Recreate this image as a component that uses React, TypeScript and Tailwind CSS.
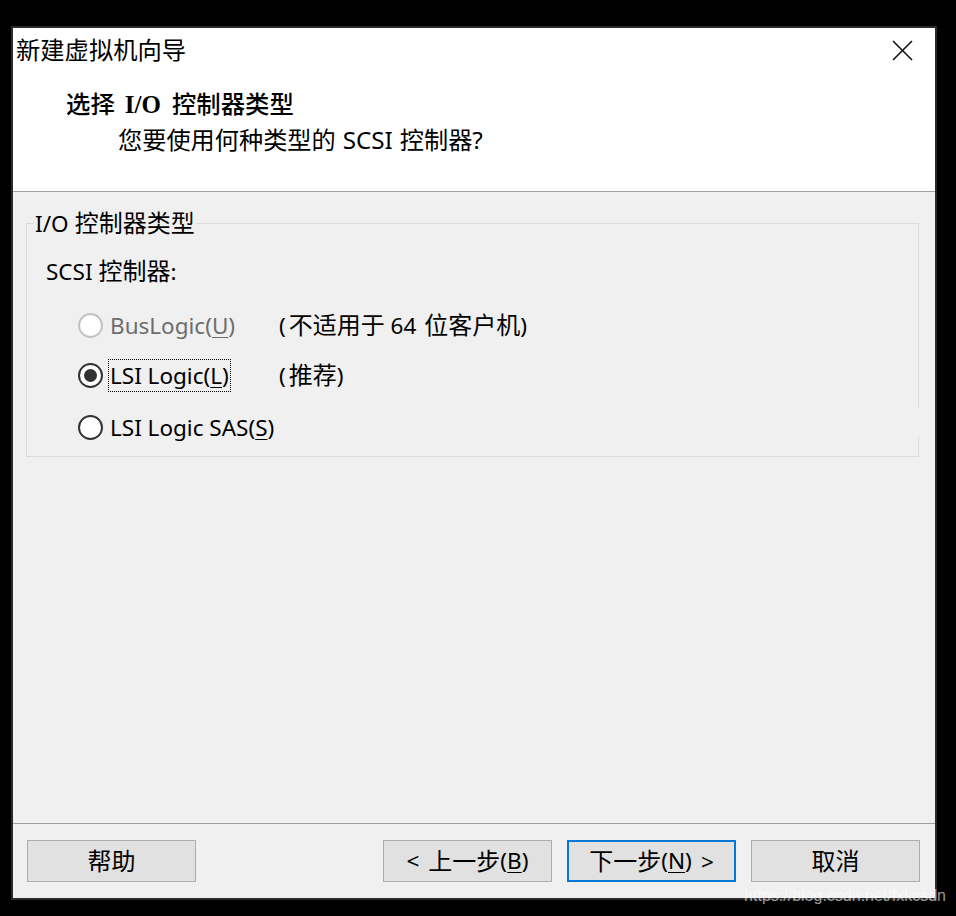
import React from "react";

function L({ children }: { children: React.ReactNode }) {
  return <span className="text-[22.5px]">{children}</span>;
}

function U({ children }: { children: React.ReactNode }) {
  return <span className="underline decoration-1 underline-offset-[3px]">{children}</span>;
}

function Radio({ checked = false, disabled = false }: { checked?: boolean; disabled?: boolean }) {
  return (
    <span
      className={
        disabled
          ? "flex h-[25px] w-[25px] shrink-0 items-center justify-center rounded-full border-2 border-[#c2c2c2] bg-white"
          : "flex h-[25px] w-[25px] shrink-0 items-center justify-center rounded-full border-2 border-[#333333] bg-white"
      }
    >
      {checked && <span className="h-[13px] w-[13px] rounded-full bg-[#333333]" />}
    </span>
  );
}

function Btn({ children, primary = false }: { children: React.ReactNode; primary?: boolean }) {
  return (
    <div
      className={
        primary
          ? "flex h-[42px] w-[169px] items-center justify-center border-2 border-[#0078d7] bg-[#e1e1e1] text-[24px] leading-[30px] text-black"
          : "flex h-[42px] w-[169px] items-center justify-center border border-[#adadad] bg-[#e1e1e1] text-[24px] leading-[30px] text-black"
      }
    >
      {children}
    </div>
  );
}

export default function App() {
  return (
    <div className="relative h-[916px] w-[956px] overflow-hidden bg-black pl-[11px] pt-[26px] font-['Noto_Sans','Noto_Sans_CJK_SC',sans-serif]">
      <div className="flex h-[874px] w-[926px] flex-col border-2 border-[#2b2b2b]">
        {/* header */}
        <div className="h-[164px] shrink-0 border-b border-[#a0a0a0] bg-white">
          <div className="flex h-[44px] items-center justify-between pl-[3px] pr-[22px]">
            <span className="text-[24.3px] leading-none text-black">新建虚拟机向导</span>
            <svg width="21" height="21" viewBox="0 0 21 21" className="mt-[1px]">
              <path d="M1 1 L20 20 M20 1 L1 20" stroke="#111" strokeWidth="1.6" fill="none" />
            </svg>
          </div>
          <div className="mt-[14px] flex h-[36px] items-center pl-[53px] text-[24.4px] font-medium leading-none text-black">
            <span>选择</span>
            <span className="ml-[10px] font-['Liberation_Serif',serif] text-[25px] font-bold">I/O</span>
            <span className="ml-[11px]">控制器类型</span>
          </div>
          <div className="flex h-[36px] items-center pl-[105px] text-[24.2px] leading-none text-black">
            <span>您要使用何种类型的</span>
            <span className="ml-[7px]">SCSI</span>
            <span className="ml-[7px]">控制器?</span>
          </div>
        </div>

        {/* body */}
        <div className="relative flex-1 bg-[#f0f0f0] pt-[31px] pl-[13px] pr-[16px]">
          <div className="relative h-[234px] border border-[#dcdcdc]">
            <span className="absolute left-[7px] top-[-17px] bg-[#f0f0f0] px-[1px] text-[24px] leading-[32px] text-black">
              <L>I/O</L> 控制器类型
            </span>
            <div className="absolute right-[-2px] top-[184px] h-[29px] w-[4px] bg-[#f0f0f0]" />
            <div className="pt-[31px] pl-[19px] text-[24px] leading-[32px] text-black">
              <L>SCSI </L>控制器<L>:</L>
            </div>
            <div className="mt-[12px] flex h-[50px] items-center pl-[51px] text-[24px] leading-[30px]">
              <Radio disabled />
              <span className="ml-[7px] w-[169px] text-[#6d6d6d]">
                <L>
                  BusLogic(<U>U</U>)
                </L>
              </span>
              <span className="text-black">
                <L>(</L>
                <span className="ml-[3px]">不适用于</span>
                <L> 64 </L>
                <span className="ml-[2px]">位客户机</span>
                <L>)</L>
              </span>
            </div>
            <div className="flex h-[50px] items-center pl-[51px] text-[24px] leading-[30px]">
              <Radio checked />
              <span className="ml-[5px] w-[171px]">
                <span className="inline-block border border-dotted border-black px-[1px] text-black">
                  <L>
                    LSI Logic(<U>L</U>)
                  </L>
                </span>
              </span>
              <span className="text-black">
                <L>(</L>
                <span className="ml-[3px]">推荐</span>
                <L>)</L>
              </span>
            </div>
            <div className="mt-[2px] flex h-[50px] items-center pl-[51px] text-[24px] leading-[30px]">
              <Radio />
              <span className="ml-[7px] text-black">
                <L>
                  LSI Logic SAS(<U>S</U>)
                </L>
              </span>
            </div>
          </div>
        </div>

        {/* footer */}
        <div className="h-[75px] shrink-0 border-t border-[#a0a0a0] bg-[#f0f0f0] pt-[16px] pl-[14px] pr-[15px]">
          <div className="flex items-center">
            <Btn>帮助</Btn>
            <div className="flex-1" />
            <div className="flex gap-[15px]">
              <Btn>
                <L>&lt;</L>
                <span className="ml-[9px]">上一步</span>
                <L>
                  (<U>B</U>)
                </L>
              </Btn>
              <Btn primary>
                <span>下一步</span>
                <L>
                  (<U>N</U>)
                </L>
                <span className="ml-[9px]">
                  <L>&gt;</L>
                </span>
              </Btn>
              <Btn>取消</Btn>
            </div>
          </div>
        </div>
      </div>
      <span className="absolute right-[10px] top-[885px] font-['Liberation_Sans',Arial,sans-serif] text-[16px] leading-[22px] text-white/60">
        https://blog.csdn.net/fxkcsdn
      </span>
    </div>
  );
}
